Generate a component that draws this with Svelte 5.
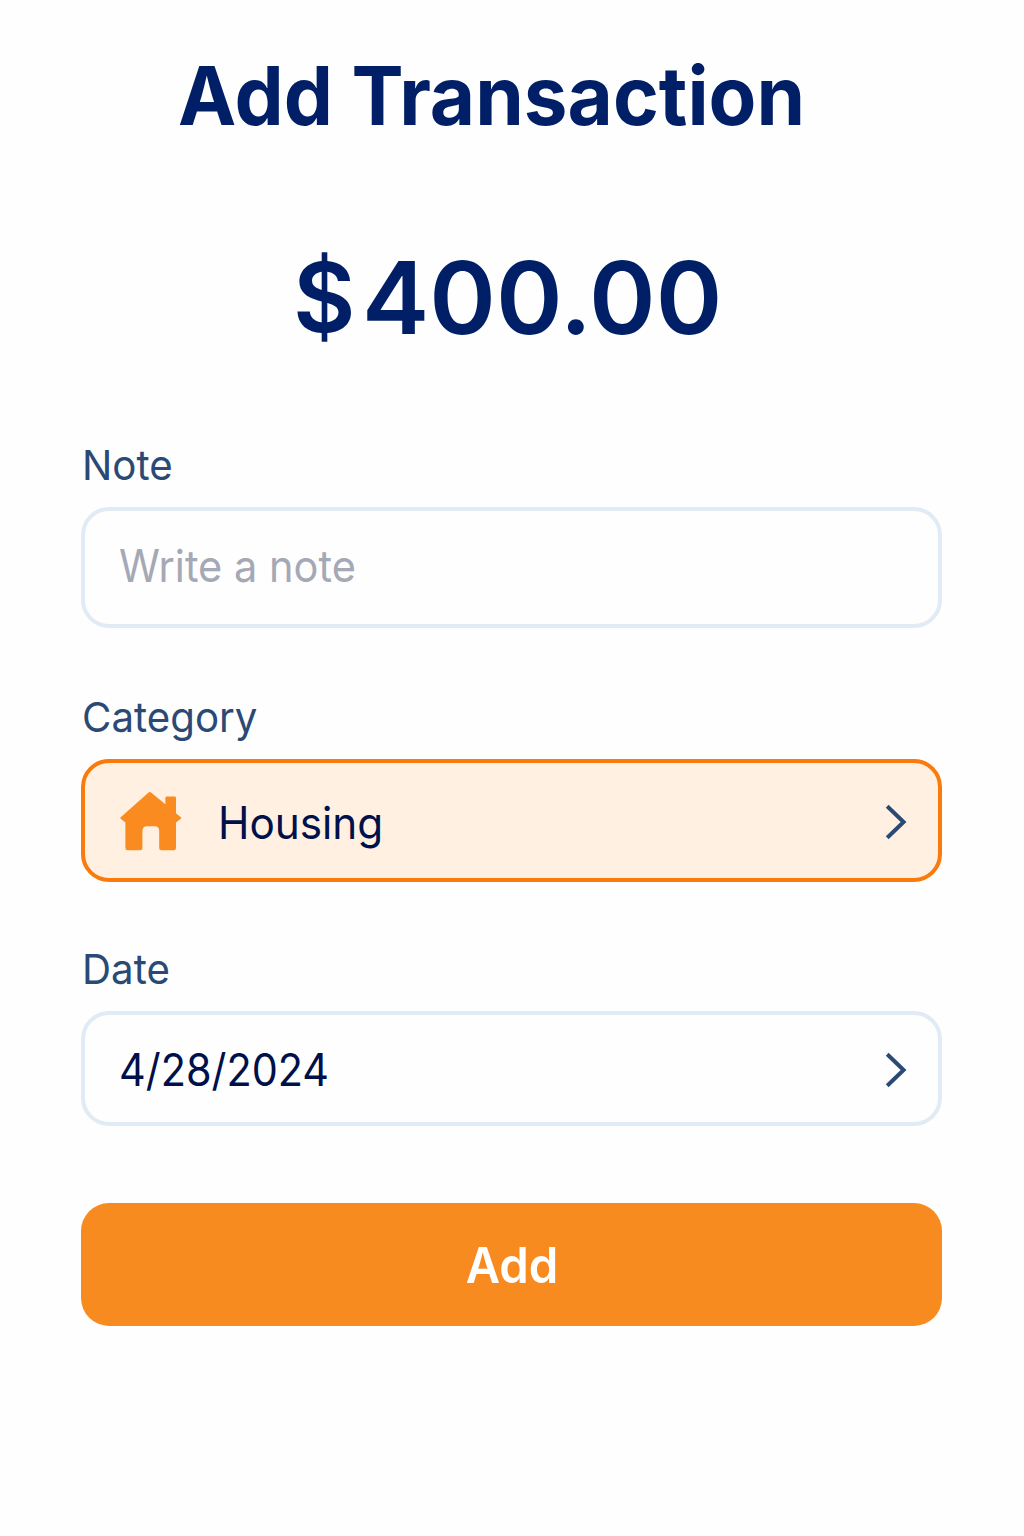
<script>
  let note = $state('');
  const category = 'Housing';
  const date = '4/28/2024';
</script>

{#snippet chevron()}
  <svg class="chevron" viewBox="0 0 24 38" aria-hidden="true">
    <path d="M2.2 3.2 L18.6 19 L2.2 34.8" />
  </svg>
{/snippet}

<main class="screen">
  <h1 class="title"><span>Add Transaction</span></h1>
  <div class="amount"><span class="dollar">$</span><span class="digits">400.00</span></div>

  <form class="form">
    <div class="group">
      <label class="label" for="note"><span>Note</span></label>
      <div class="field note">
        <input id="note" type="text" placeholder="Write a note" bind:value={note} />
      </div>
    </div>

    <div class="group">
      <div class="label"><span>Category</span></div>
      <div class="field category">
        <svg class="house" viewBox="0 0 62 60" aria-hidden="true">
          <path d="M28.3 1.8 Q29.8 .4 31.3 1.8 L45.4 13.2 V7 Q45.4 5.6 46.8 5.6 H54.6 Q56 5.6 56 7 V22.2 L60.8 26.2 Q61.7 27 60.8 27.8 L56 31.6 V57 Q56 59.2 53.8 59.2 H41.4 Q39.2 59.2 39.2 57 V40 Q39.2 35.2 34.6 35.2 H27 Q22.4 35.2 22.4 40 V57 Q22.4 59.2 20.2 59.2 H7.6 Q5.4 59.2 5.4 57 V31.6 L.7 27.8 Q-.1 27 .7 26.2 Z" />
        </svg>
        <span class="value housing">{category}</span>
        {@render chevron()}
      </div>
    </div>

    <div class="group">
      <div class="label"><span>Date</span></div>
      <div class="field date">
        <span class="value day">{date}</span>
        {@render chevron()}
      </div>
    </div>

    <button class="submit" type="button"><span>Add</span></button>
  </form>
</main>

<style>
  :global(body) {
    background: #fefefe;
  }

  .screen {
    box-sizing: border-box;
    width: 1024px;
    height: 1536px;
    padding: 46px 82px 0 81px;
    display: flex;
    flex-direction: column;
    background: #fefefe;
    font-family: Inter, 'Liberation Sans', sans-serif;
    color: #001f66;
  }

  span {
    display: inline-block;
    white-space: nowrap;
    transform-origin: left center;
  }

  .title {
    margin: 0;
    padding-left: 97px;
    font-size: 81px;
    line-height: 100px;
    font-weight: 660;
  }

  .title span {
    transform: scaleX(0.964);
  }

  .amount {
    display: flex;
    margin-top: 90px;
    padding-left: 212px;
    font-size: 101px;
    line-height: 122px;
    font-weight: 620;
  }

  .dollar {
    width: 69px;
    font-size: 96px;
  }

  .form {
    display: flex;
    flex-direction: column;
    margin-top: 82px;
  }

  .group {
    display: flex;
    flex-direction: column;
  }

  .label {
    height: 50px;
    margin-bottom: 17px;
    padding-left: 1px;
    font-size: 41.5px;
    line-height: 50px;
    color: #2a4a75;
  }

  .label span {
    transform: scaleX(0.97);
  }

  .field {
    box-sizing: border-box;
    display: flex;
    align-items: center;
    padding: 2px 29px 0 34px;
    border: 4px solid #e0ebf6;
    border-radius: 28px;
    background: #fefefe;
  }

  .note {
    height: 121px;
    margin-bottom: 64px;
    padding-top: 0;
    padding-bottom: 4px;
  }

  .category {
    height: 123px;
    margin-bottom: 62px;
    padding-left: 35px;
    border-color: #fb7a0c;
    background: #fff0e1;
  }

  .date {
    height: 115px;
    margin-bottom: 77px;
    padding-top: 3px;
  }

  input {
    flex: 1;
    min-width: 0;
    padding: 0;
    border: 0;
    outline: 0;
    background: transparent;
    font: 400 44.5px/56px Inter, 'Liberation Sans', sans-serif;
    color: #00104a;
    transform: scaleX(0.934);
    transform-origin: left center;
  }

  input::placeholder {
    color: #a5a8b5;
    opacity: 1;
  }

  .value {
    flex: 1;
    font-size: 44.5px;
    line-height: 56px;
    color: #00104a;
  }

  .housing {
    padding-top: 2px;
    transform: scaleX(0.95);
  }

  .day {
    transform: scaleX(0.93);
  }

  .house {
    width: 62px;
    height: 60px;
    margin: -2px 36px 0 0;
    fill: #f98b20;
  }

  .chevron {
    width: 24px;
    height: 38px;
    fill: none;
    stroke: #2a4a75;
    stroke-width: 4;
  }

  .submit {
    height: 123px;
    padding: 2px 0 0 2px;
    border: 0;
    border-radius: 28px;
    background: #f88b20;
    color: #fff;
    font: 600 49px/60px Inter, 'Liberation Sans', sans-serif;
  }

  .submit span {
    transform: scaleX(0.965);
    transform-origin: center;
  }
</style>
